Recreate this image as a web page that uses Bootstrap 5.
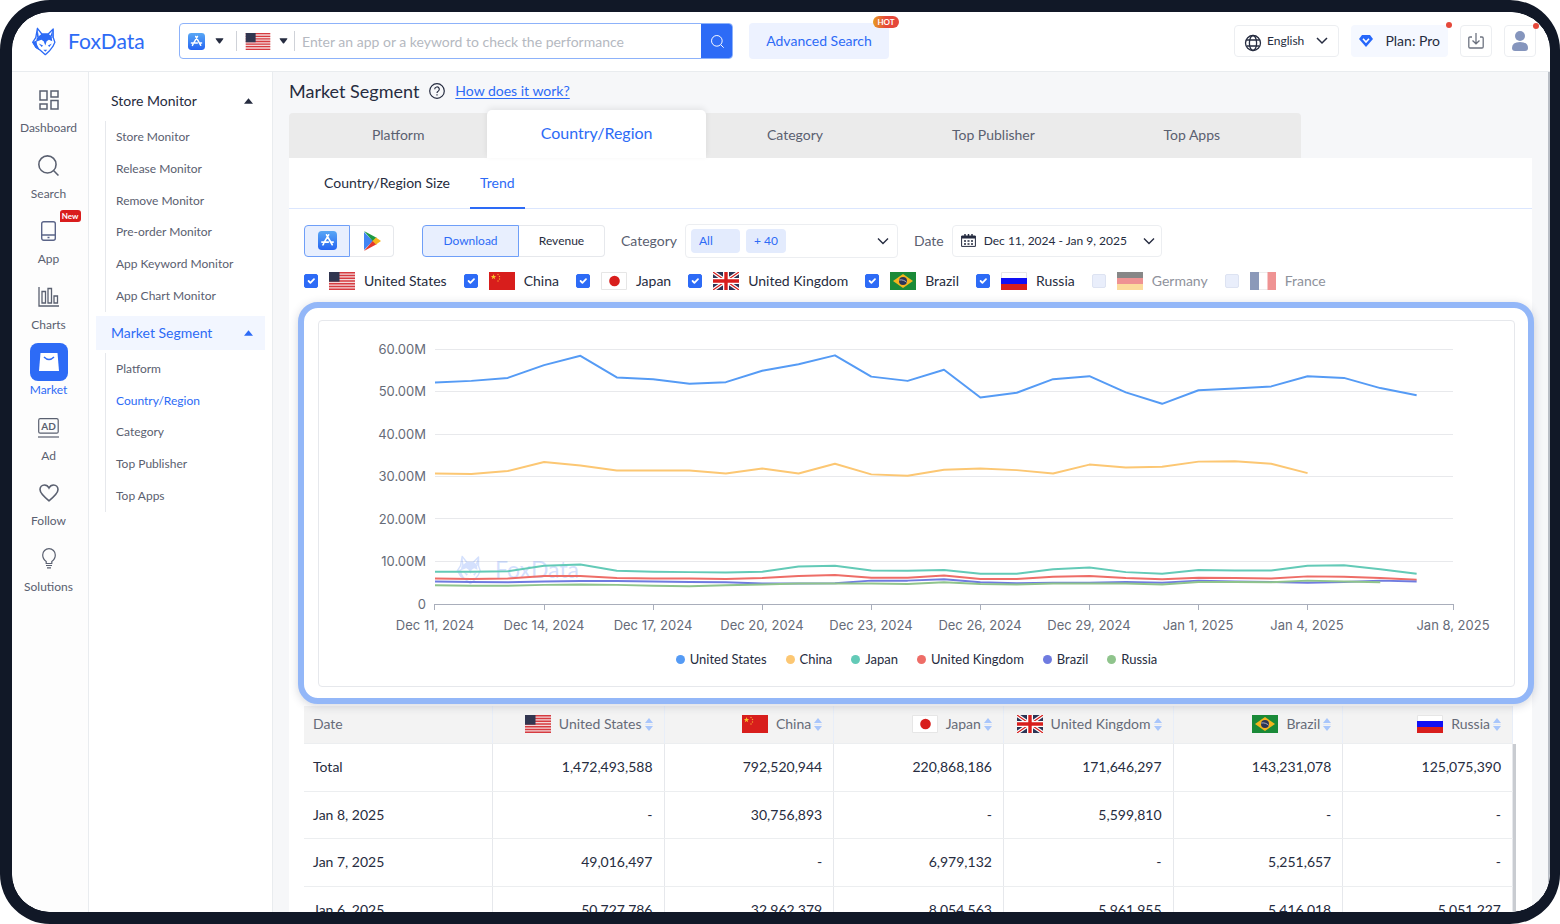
<!DOCTYPE html>
<html lang="en">
<head>
<meta charset="utf-8">
<meta name="viewport" content="width=device-width, initial-scale=1">
<title>FoxData - Market Segment</title>
<link href="https://cdn.jsdelivr.net/npm/bootstrap@5.3.0/dist/css/bootstrap.min.css" rel="stylesheet">
<style>
:root{--fx-blue:#2d6bf6;--fx-ink:#262c40;--fx-mute:#5a6070;--fx-line:#e6e8ec}
body{font-family:Lato,"Noto Sans",sans-serif;font-size:14px;line-height:20px;color:var(--fx-ink);background:#fff}
a{color:inherit;text-decoration:none}
button{font:inherit;color:inherit}
svg{display:block;flex:none}
.shell{height:100vh;border:solid #111827;border-width:12px 10px 12px 12px;border-radius:50px;overflow:hidden;background:#111827}
.shell-in{border-radius:38px;background:#fff;overflow:hidden}
.topbar{height:60px;border-bottom:1px solid #e9ecef;padding:0 14px 1px 20px;background:#fff}
.brand{color:var(--fx-blue);font-size:21px;line-height:28px;width:147px;gap:12px}
.searchbox{width:554px;height:36px;border:1px solid #8db2fa;border-radius:4px;overflow:hidden}
.searchbox input{font-size:14px;box-shadow:none!important;padding:0 7px}
.searchbox input::placeholder{color:#b5b9c1;opacity:1}
.pick{border:0;background:none;padding:0 6px 0 8px;height:20px;gap:8px;border-right:1px solid #cfd2d8}
.pick.roomy{padding-right:12px;gap:10px}
.btn-go{background:var(--fx-blue);width:32px;border:0;margin:-1px}
.btn-adv{background:#edf2ff;color:var(--fx-blue);height:36px;width:140px;border-radius:4px;margin-left:16px}
.hot{top:-7px;right:-10px;width:26px;height:12px;border-radius:6px;background:linear-gradient(90deg,#e89b22,#e5483a 50%);color:#fff;font-size:8px;line-height:12px;font-weight:700}
.tools{gap:12px}
.boxed{height:32px;border:1px solid #eceef1;border-radius:4px;background:#fff}
.boxed.square{width:32px}
.lang{width:105px}
.lang select{border:0;background-color:transparent;font-size:12px;padding:0 26px 0 32px;color:var(--fx-ink);height:30px;background-image:url("data:image/svg+xml,%3Csvg xmlns='http://www.w3.org/2000/svg' viewBox='0 0 12 12'%3E%3Cpath d='M1 3l5 5 5-5' fill='none' stroke='%23262c40' stroke-width='1.500'/%3E%3C/svg%3E");background-size:12px;background-position:right 10px center}
.lang svg{left:9px;top:8px}
.plan{width:97px;background:#f5f8ff;height:32px;border:0;border-radius:4px}
.dot-red{width:6px;height:6px;border-radius:50%;background:#e5483a;top:-3px;right:-4px}
.rail{width:77px;background:#fdfdfd;border-right:1px solid #e9ecef;padding:11px 3px 0 0}
.rail-list{height:524px}
.rail a{color:var(--fx-mute);font-size:12px;line-height:16px;gap:3px}
.rail .ico{width:38px;height:34px}
.rail a.on{color:var(--fx-blue)}
.rail a.on .ico{background:var(--fx-blue);border-radius:8px;height:38px;margin:-2px 0}
.new-tag{background:#d91d1d;color:#fff;font-size:8px;line-height:12px;height:12px;width:21px;border-radius:3px 3px 3px 0;left:30px;top:-4px;font-weight:700}
.side{width:184px;border-right:1px solid #e9ecef;padding:12px 7px 0;background:#fff}
.side-head{height:34px;padding:0 12px 0 15px}
.side-head.on{background:#f2f6ff;color:var(--fx-blue)}
.side-list{margin-left:9px;border-left:1px solid var(--fx-line);padding-left:10px;font-size:12px;color:var(--fx-mute)}
.side-list .on{color:var(--fx-blue)}
.len-6{height:191px;margin-top:3px;margin-bottom:4px}
.len-5{height:159px;margin-top:3px}
.work{background:#f6f7f9;padding:0 16px;border-right:2px solid #b9bec6;overflow:hidden}
.page-title{height:38px;gap:10px}
.page-title h1{font-size:18px;line-height:24px;font-weight:400;margin:0}
.page-title a{color:var(--fx-blue);text-decoration:underline;text-underline-offset:2px}
.seg{max-width:1012px;height:45px;margin-top:3px;padding:0 10px;grid-template-columns:repeat(5,1fr);background:#ebebeb;border-radius:4px 4px 0 0}
.seg a{color:var(--fx-mute);height:45px;padding-bottom:2px}
.seg a.on{background:#fff;color:var(--fx-blue);margin:-3px -10px 0;height:48px;font-size:16px;border-radius:5px 5px 0 0;box-shadow:0 -2px 6px rgba(0,0,0,.08)}
.panel-w{background:#fff}
.sub{height:51px;border-bottom:1px solid #dbe6fe;padding-left:25px;gap:10px}
.sub a{padding:0 10px 2px;height:51px}
.sub a.on{color:var(--fx-blue);border-bottom:2px solid var(--fx-blue);padding-bottom:0}
.filters{padding:14px 15px 0;height:49px}
.filters .lbl{color:var(--fx-mute)}
.duo button{height:32px;border:1px solid var(--fx-line);background:#fff;font-size:12px;padding:0}
.duo button:first-child{border-radius:4px 0 0 4px}
.duo button:last-child{border-radius:0 4px 4px 0;border-left:0}
.duo button.on{background:#e8effe;border:1px solid #6f9ff8;color:var(--fx-blue)}
.cat-pick{width:213px;height:34px;border:1px solid #eceef1;border-radius:4px;background:#fff;padding:0 8px 0 5px;gap:6px}
.chip{background:#e3ebfd;color:var(--fx-blue);font-size:12px;height:24px;border-radius:4px;padding:0 8px}
.chip.wide{width:49px}
.date-pick{width:210px;font-size:12px;padding:0 6px 0 8px}
.checks{padding:0 15px;height:45px;gap:17px}
.checks label{gap:9px}
.checks input.form-check-input{width:14px;height:14px;margin:0 2px 0 0;border-radius:2px;background-color:#e9eefb;border:1px solid #dde3f2;flex:none}
.checks input.form-check-input:checked{background-color:var(--fx-blue);border-color:var(--fx-blue)}
.checks .off{color:#8e929c}
.checks .off svg{opacity:.5}
.spot{margin:-1px -2px 0 9px;border:6px solid #93b7f8;border-radius:20px;padding:12px 13px 11px 14px;background:#fff;box-shadow:0 2px 10px rgba(40,50,80,.2);z-index:1}
.chart-box{border:1px solid var(--fx-line);border-radius:4px;padding-bottom:17px}
.axis text{font:13px Inter,sans-serif;fill:#666b78}
.legend{gap:19px;font-size:13px}
.legend span{gap:5px}
.legend i{width:9px;height:9px;border-radius:50%}
.grid-box{margin:2px 19px 0 15px;position:relative}
.grid-box::after{content:"";position:absolute;right:-3px;top:38px;bottom:0;width:3px;background:#c9ccd1}
.grid-box table{table-layout:fixed;width:100%;margin:0;color:var(--fx-ink)}
.grid-box th,.grid-box td{border:0;border-right:1px solid var(--fx-line);border-bottom:1px solid #eceef0;padding:0 11px 0 9px;height:48px;vertical-align:middle;text-align:right;font-weight:400}
.grid-box tr:nth-child(even)>*{height:47px}
.grid-box thead th{height:37px;background:#f3f3f3;color:#666b78;border-right-color:#e8eef8}
.grid-box th:first-child{text-align:left}
.sorts{gap:8px}
.sorts button{border:0;background:none;padding:0;gap:3px}
</style>
</head>
<body>
<svg width="0" height="0" class="position-absolute" aria-hidden="true">
<defs>
<symbol id="us" viewBox="0 0 26 18"><path fill="#f3d9da" d="M0 0h26v18H0z"/><path stroke="#d63b40" stroke-width="1.400" d="M0 .7h26M0 3.500h26M0 6.200h26M0 9h26M0 11.800h26M0 14.500h26M0 17.300h26"/><path fill="#313650" d="M0 0h10.500v9.700H0z"/></symbol>
<symbol id="cn" viewBox="0 0 26 18"><path fill="#d81e1c" d="M0 0h26v18H0z"/><path fill="#f8c52c" d="M4.500 2l.7 2h2L5.600 5.300l.6 2-1.700-1.200-1.700 1.200.6-2L1.800 4h2z"/><g fill="#f8a52c"><circle cx="9" cy="2.500" r=".7"/><circle cx="10.500" cy="4.500" r=".7"/><circle cx="10.500" cy="7" r=".7"/><circle cx="9" cy="9" r=".7"/></g></symbol>
<symbol id="jp" viewBox="0 0 26 18"><path fill="#fff" stroke="#e6e6e6" d="M.5.500h25v17H.5z"/><circle cx="13.500" cy="9" r="5.300" fill="#d81e1c"/></symbol>
<symbol id="uk" viewBox="0 0 26 18"><path fill="#2c3455" d="M0 0h26v18H0z"/><path stroke="#fff" stroke-width="3.600" d="M0 0l26 18M26 0L0 18"/><path stroke="#d81e1c" stroke-width="1.200" d="M0 0l26 18M26 0L0 18"/><path stroke="#fff" stroke-width="6" d="M13 0v18M0 9h26"/><path stroke="#d81e1c" stroke-width="3.400" d="M13 0v18M0 9h26"/></symbol>
<symbol id="br" viewBox="0 0 26 18"><path fill="#1a8a38" d="M0 0h26v18H0z"/><path fill="#f4b51e" d="M13 2l10 7-10 7L3 9z"/><circle cx="13" cy="9" r="4" fill="#2c3455"/><path d="M9.300 8c3-.5 5.500.5 7.300 2.300" stroke="#c9cddb" fill="none" stroke-width=".8"/></symbol>
<symbol id="ru" viewBox="0 0 26 18"><path fill="#fff" stroke="#e6e6e6" d="M.5.500h25v17H.5z"/><path fill="#1010f5" d="M0 6h26v6H0z"/><path fill="#d81e1c" d="M0 12h26v6H0z"/></symbol>
<symbol id="de" viewBox="0 0 26 18"><path fill="#111" d="M0 0h26v6H0z"/><path fill="#e02a2a" d="M0 6h26v6H0z"/><path fill="#fbbb3d" d="M0 12h26v6H0z"/></symbol>
<symbol id="fr" viewBox="0 0 26 18"><path fill="#fff" stroke="#ddd" d="M.5.500h25v17H.5z"/><path fill="#1a3676" d="M0 0h9v18H0z"/><path fill="#e02a2a" d="M17.500 0H26v18h-8.500z"/></symbol>
<symbol id="fox" viewBox="0 0 72 88"><path fill="none" stroke="currentColor" stroke-width="4" stroke-linejoin="round" d="M16 4l-5 28-9 14 10 16 12 8 16 14 12-11 11-14 6-13-5-14V6L48 22H30z"/><path fill="currentColor" d="M20 28l10-8h18l11 8 2 15-10-4-7 4-4 13-5-13-7-4-16 6 2-12zM0 46l13-5 2 13 9 17-14-8zM20 50l13 6-4 5zM60 50l-12 6 4 5zM34 69h12l-6 6zM16 4l4 24-6 4zM63 6l-7 20 6 8z"/></symbol>
<symbol id="appstore" viewBox="0 0 20 20"><linearGradient id="ag" x2="0" y2="1"><stop stop-color="#58a7f5"/><stop offset="1" stop-color="#2564f2"/></linearGradient><rect width="20" height="20" rx="4" fill="url(#ag)"/><path d="M11.200 4L6.800 11.500M9 4l6 10.500M4 11.700h7M13.300 11.700H16M6 13.200L5.200 14.600" stroke="#fff" stroke-width="1.700" stroke-linecap="round"/></symbol>
<symbol id="caret" viewBox="0 0 10 6"><path d="M1.200 0h7.600q1 0 .4.900L5.700 5.400q-.7.700-1.400 0L.8.900Q.2 0 1.200 0z" fill="currentColor"/></symbol>
<symbol id="caretup" viewBox="0 0 8 5"><path d="M4 0l4 5H0z" fill="currentColor"/></symbol>
<symbol id="chev" viewBox="0 0 12 8"><path d="M1 1.500l5 5 5-5" fill="none" stroke="#262c40" stroke-width="1.400"/></symbol>
<symbol id="lens" viewBox="0 0 20 20"><g fill="none" stroke="currentColor" stroke-width="1.500"><circle cx="9" cy="9" r="8.200"/><path d="M15 15l4.500 4.500"/></g></symbol>
<symbol id="sort" viewBox="0 0 8 13"><path d="M4 0l4 5H0zM4 13l4-5H0z" fill="#a9c6fb"/><path d="M0 6.500h8" stroke="#dfe8fb"/></symbol>
</defs>
</svg>

<div class="shell">
<div class="shell-in h-100 d-flex flex-column">
<header class="topbar d-flex align-items-center flex-shrink-0">
  <a class="brand d-flex align-items-center" href="#"><svg width="24" height="29"><use href="#fox"/></svg>FoxData</a>
  <form class="searchbox d-flex align-items-center">
    <button type="button" class="pick roomy d-flex align-items-center" aria-label="Store"><svg width="17" height="17"><use href="#appstore"/></svg><svg width="9" height="6"><use href="#caret"/></svg></button>
    <button type="button" class="pick d-flex align-items-center" aria-label="Country"><svg width="26" height="17"><use href="#us"/></svg><svg width="9" height="6"><use href="#caret"/></svg></button>
    <input class="form-control border-0 h-100" type="text" aria-label="Search" placeholder="Enter an app or a keyword to check the performance">
    <button type="button" class="btn-go d-flex align-items-center justify-content-center flex-shrink-0 text-white align-self-stretch" aria-label="Go"><svg width="13" height="13"><use href="#lens"/></svg></button>
  </form>
  <a class="btn-adv d-flex align-items-center justify-content-center position-relative" href="#">Advanced Search<span class="hot position-absolute text-center">HOT</span></a>
  <div class="tools d-flex align-items-center ms-auto">
    <div class="boxed lang position-relative"><svg class="position-absolute" width="18" height="18" viewBox="0 0 18 18" fill="none" stroke="#262c40" stroke-width="1.300"><circle cx="9" cy="9" r="7.500"/><ellipse cx="9" cy="9" rx="3.600" ry="7.500"/><path d="M2.500 6h13M2.500 12h13"/></svg><select class="form-select" aria-label="Language"><option>English</option></select></div>
    <button type="button" class="plan position-relative d-flex align-items-center justify-content-between px-2"><svg width="14" height="12" viewBox="0 0 14 12"><path d="M3 0h8l3 4-7 8-7-8z" fill="#2667fb"/><path d="M4 3.800l3 3.200 3-3.200" stroke="#fff" stroke-width="1.600" fill="none"/></svg>Plan: Pro<span class="dot-red position-absolute"></span></button>
    <button type="button" class="boxed square d-flex align-items-center justify-content-center p-0" aria-label="Download"><svg width="16" height="16" viewBox="0 0 16 16" fill="none" stroke="#6d7380" stroke-width="1.300"><path d="M4 4H2Q.8 4 .8 5.200v8.600Q.8 15 2 15h12q1.200 0 1.200-1.200V5.200Q15.200 4 14 4h-2M8 0v10.500M4.500 7.500L8 10.800l3.500-3.300"/></svg></button>
    <button type="button" class="boxed square d-flex align-items-center justify-content-center position-relative p-0" aria-label="Account"><svg width="16" height="20" viewBox="0 0 16 20" fill="#8595bd"><circle cx="8" cy="5" r="5"/><path d="M0 17q0-6 8-6t8 6q0 3-3 3H3q-3 0-3-3z"/></svg><span class="dot-red position-absolute"></span></button>
  </div>
</header>

<div class="d-flex flex-grow-1 overflow-hidden">
<nav class="rail flex-shrink-0">
  <div class="rail-list d-flex flex-column">
    <a href="#" class="flex-fill d-flex flex-column align-items-center"><span class="ico d-flex align-items-center justify-content-center"><svg width="20" height="20" viewBox="0 0 20 20" fill="none" stroke="#5a6070" stroke-width="1.500"><path d="M1 1h7v9H1zM12 1h7v6h-7zM1 14h7v5H1zM12 10.500h7V19h-7z"/></svg></span>Dashboard</a>
    <a href="#" class="flex-fill d-flex flex-column align-items-center"><span class="ico d-flex align-items-center justify-content-center"><svg width="21" height="21"><use href="#lens"/></svg></span>Search</a>
    <a href="#" class="flex-fill d-flex flex-column align-items-center"><span class="ico d-flex align-items-center justify-content-center position-relative"><svg width="15" height="20" viewBox="0 0 15 20" fill="none" stroke="#5a6488" stroke-width="1.400"><rect x=".7" y=".7" width="13.600" height="18.600" rx="2"/><path d="M1 14h13M6.500 16.500h2"/></svg><span class="new-tag position-absolute text-center">New</span></span>App</a>
    <a href="#" class="flex-fill d-flex flex-column align-items-center"><span class="ico d-flex align-items-center justify-content-center"><svg width="21" height="20" viewBox="0 0 21 20" fill="none" stroke="#5a6070" stroke-width="1.300"><path d="M1 0v19h20M4 4.500h3.500V16H4zM10 1.500h3.500V16H10zM16 9h3.500v7H16z"/></svg></span>Charts</a>
    <a href="#" class="on flex-fill d-flex flex-column align-items-center"><span class="ico d-flex align-items-center justify-content-center"><svg width="20" height="18" viewBox="0 0 20 18"><path d="M1.500 0h17L20 18H0z" fill="#fff"/><path d="M5 4q5 5 10 0" stroke="#2d6bf6" stroke-width="1.500" fill="none"/></svg></span>Market</a>
    <a href="#" class="flex-fill d-flex flex-column align-items-center"><span class="ico d-flex align-items-center justify-content-center"><svg width="21" height="20" viewBox="0 0 21 20" fill="none" stroke="#5a6070" stroke-width="1.200"><rect x=".7" y=".7" width="19.500" height="14.500" rx="1.500"/><path d="M0 19h21"/><text x="10.500" y="11.800" text-anchor="middle" font-size="10" font-weight="700" fill="#5a6070" stroke="none">AD</text></svg></span>Ad</a>
    <a href="#" class="flex-fill d-flex flex-column align-items-center"><span class="ico d-flex align-items-center justify-content-center"><svg width="20" height="18" viewBox="0 0 20 18" fill="none" stroke="#5a6070" stroke-width="1.600"><path d="M10 16.800C4 12 1 9 1 5.600 1 3 3 1 5.400 1 7.500 1 9 2 10 4c1-2 2.500-3 4.600-3C17 1 19 3 19 5.600c0 3.400-3 6.400-9 11.200z"/></svg></span>Follow</a>
    <a href="#" class="flex-fill d-flex flex-column align-items-center"><span class="ico d-flex align-items-center justify-content-center"><svg width="14" height="21" viewBox="0 0 14 21" fill="none" stroke="#5a6070" stroke-width="1.200"><path d="M4.200 15.500v-2Q.7 11 .7 7a6.300 6.300 0 0 1 12.600 0q0 4-3.500 6.500v2zM4 17.500h6M5 19.800h4"/></svg></span>Solutions</a>
  </div>
</nav>

<aside class="side flex-shrink-0">
  <div class="side-head d-flex align-items-center justify-content-between">Store Monitor<svg width="9" height="6"><use href="#caretup"/></svg></div>
  <div class="side-list len-6 d-flex flex-column">
    <a href="#" class="flex-fill d-flex align-items-center">Store Monitor</a><a href="#" class="flex-fill d-flex align-items-center">Release Monitor</a><a href="#" class="flex-fill d-flex align-items-center">Remove Monitor</a><a href="#" class="flex-fill d-flex align-items-center">Pre-order Monitor</a><a href="#" class="flex-fill d-flex align-items-center">App Keyword Monitor</a><a href="#" class="flex-fill d-flex align-items-center">App Chart Monitor</a>
  </div>
  <div class="side-head on d-flex align-items-center justify-content-between">Market Segment<svg width="9" height="6"><use href="#caretup"/></svg></div>
  <div class="side-list len-5 d-flex flex-column">
    <a href="#" class="flex-fill d-flex align-items-center">Platform</a><a href="#" class="on flex-fill d-flex align-items-center">Country/Region</a><a href="#" class="flex-fill d-flex align-items-center">Category</a><a href="#" class="flex-fill d-flex align-items-center">Top Publisher</a><a href="#" class="flex-fill d-flex align-items-center">Top Apps</a>
  </div>
</aside>

<main class="work flex-grow-1">
  <div class="page-title d-flex align-items-center"><h1>Market Segment</h1><svg width="16" height="16" viewBox="0 0 16 16" fill="none" stroke="#262c40" stroke-width="1.200"><circle cx="8" cy="8" r="7.300"/><path d="M5.700 6.300a2.300 2.300 0 1 1 3.400 2Q8 8.800 8 10M8 11.200v1.300"/></svg><a href="#">How does it work?</a></div>
  <nav class="seg d-grid">
    <a href="#" class="d-flex align-items-center justify-content-center">Platform</a><a href="#" class="on d-flex align-items-center justify-content-center">Country/Region</a><a href="#" class="d-flex align-items-center justify-content-center">Category</a><a href="#" class="d-flex align-items-center justify-content-center">Top Publisher</a><a href="#" class="d-flex align-items-center justify-content-center">Top Apps</a>
  </nav>
  <div class="panel-w">
    <nav class="sub d-flex"><a href="#" class="d-flex align-items-center">Country/Region Size</a><a href="#" class="on d-flex align-items-center">Trend</a></nav>
    <div class="filters d-flex align-items-center">
      <div class="duo d-flex"><button type="button" class="on d-flex align-items-center justify-content-center" aria-label="App Store" style="width:46px"><svg width="19" height="19"><use href="#appstore"/></svg></button><button type="button" class="d-flex align-items-center justify-content-center" aria-label="Google Play" style="width:44px"><svg width="18" height="20" viewBox="0 0 18 20"><path d="M1 1v18l9-9z" fill="#4285f4"/><path d="M1 0l13 7-4 3.500z" fill="#1e9a43"/><path d="M1 20l13-7-4-3.500z" fill="#e5382c"/><path d="M13 6.500l5 3.500-5 3.500L9.500 10z" fill="#f6b51d"/></svg></button></div>
      <div class="duo d-flex ms-4 ps-1"><button type="button" class="on" style="width:97px">Download</button><button type="button" style="width:86px">Revenue</button></div>
      <span class="lbl ms-3 me-2" id="catl">Category</span>
      <button type="button" class="cat-pick d-flex align-items-center" aria-labelledby="catl"><span class="chip wide d-flex align-items-center">All</span><span class="chip d-flex align-items-center">+ 40</span><svg width="12" height="8" class="ms-auto"><use href="#chev"/></svg></button>
      <span class="lbl ms-3 me-2" id="datel">Date</span>
      <button type="button" class="boxed date-pick d-flex align-items-center" aria-labelledby="datel"><svg width="15" height="13" viewBox="0 0 15 13"><path d="M.6 2h13.800v10.400H.6z" fill="none" stroke="#262c40"/><path d="M.6 2h13.800v2.600H.6z" fill="#262c40"/><path d="M4 0v3M7.500 0v3M11 0v3" stroke="#262c40" stroke-width="1.500"/><path d="M3 7h9.500M3 10h9.500" stroke="#262c40" stroke-width="1.600" stroke-dasharray="2 1.500"/></svg><span class="ms-2">Dec 11, 2024 - Jan 9, 2025</span><svg width="12" height="8" class="ms-auto"><use href="#chev"/></svg></button>
    </div>
    <div class="checks d-flex align-items-center">
      <label class="d-flex align-items-center"><input class="form-check-input" type="checkbox" checked><svg width="26" height="18"><use href="#us"/></svg>United States</label>
      <label class="d-flex align-items-center"><input class="form-check-input" type="checkbox" checked><svg width="26" height="18"><use href="#cn"/></svg>China</label>
      <label class="d-flex align-items-center"><input class="form-check-input" type="checkbox" checked><svg width="26" height="18"><use href="#jp"/></svg>Japan</label>
      <label class="d-flex align-items-center"><input class="form-check-input" type="checkbox" checked><svg width="26" height="18"><use href="#uk"/></svg>United Kingdom</label>
      <label class="d-flex align-items-center"><input class="form-check-input" type="checkbox" checked><svg width="26" height="18"><use href="#br"/></svg>Brazil</label>
      <label class="d-flex align-items-center"><input class="form-check-input" type="checkbox" checked><svg width="26" height="18"><use href="#ru"/></svg>Russia</label>
      <label class="off d-flex align-items-center"><input class="form-check-input" type="checkbox"><svg width="26" height="18"><use href="#de"/></svg>Germany</label>
      <label class="off d-flex align-items-center"><input class="form-check-input" type="checkbox"><svg width="26" height="18"><use href="#fr"/></svg>France</label>
    </div>

    <section class="spot position-relative">
      <div class="chart-box">
        <svg class="axis w-100" viewBox="319 321 1195 328" role="img" aria-label="Downloads by country">
          <path d="M435 349.500h1018M435 391.500h1018M435 434.500h1018M435 476.500h1018M435 518.500h1018M435 561.500h1018" stroke="#e8e9ec"/>
          <path d="M434 604.500h1020M434.500 604v6M544.500 604v6M653.500 604v6M762.500 604v6M871.500 604v6M980.500 604v6M1089.500 604v6M1198.500 604v6M1307.500 604v6M1453.500 604v6" stroke="#a9aebb" fill="none"/>
          <g text-anchor="end"><text x="426" y="354">60.00M</text><text x="426" y="396">50.00M</text><text x="426" y="439">40.00M</text><text x="426" y="481">30.00M</text><text x="426" y="524">20.00M</text><text x="426" y="566">10.00M</text><text x="426" y="609">0</text></g>
          <g text-anchor="middle"><text x="435" y="630">Dec 11, 2024</text><text x="544" y="630">Dec 14, 2024</text><text x="653" y="630">Dec 17, 2024</text><text x="762" y="630">Dec 20, 2024</text><text x="871" y="630">Dec 23, 2024</text><text x="980" y="630">Dec 26, 2024</text><text x="1089" y="630">Dec 29, 2024</text><text x="1198" y="630">Jan 1, 2025</text><text x="1307" y="630">Jan 4, 2025</text><text x="1453" y="630">Jan 8, 2025</text></g>
          <g opacity=".2" color="#2d6bf6"><use href="#fox" x="456" y="555" width="26" height="30"/><text x="495" y="578" style="font:23px Lato;fill:#2d6bf6">FoxData</text></g>
          <g id="lines" fill="none" stroke-width="2" stroke-linejoin="round"></g>
        </svg>
        <div class="legend d-flex justify-content-center" id="legend"></div>
      </div>
    </section>

    <div class="grid-box">
      <table class="table">
        <colgroup><col style="width:188px"><col style="width:172px"><col><col><col><col><col></colgroup>
        <thead><tr><th scope="col">Date</th>
          <th scope="col"><div class="sorts d-flex align-items-center justify-content-end"><svg width="26" height="18"><use href="#us"/></svg><button type="button" class="d-flex align-items-center">United States<svg width="8" height="13"><use href="#sort"/></svg></button></div></th>
          <th scope="col"><div class="sorts d-flex align-items-center justify-content-end"><svg width="26" height="18"><use href="#cn"/></svg><button type="button" class="d-flex align-items-center">China<svg width="8" height="13"><use href="#sort"/></svg></button></div></th>
          <th scope="col"><div class="sorts d-flex align-items-center justify-content-end"><svg width="26" height="18"><use href="#jp"/></svg><button type="button" class="d-flex align-items-center">Japan<svg width="8" height="13"><use href="#sort"/></svg></button></div></th>
          <th scope="col"><div class="sorts d-flex align-items-center justify-content-end"><svg width="26" height="18"><use href="#uk"/></svg><button type="button" class="d-flex align-items-center">United Kingdom<svg width="8" height="13"><use href="#sort"/></svg></button></div></th>
          <th scope="col"><div class="sorts d-flex align-items-center justify-content-end"><svg width="26" height="18"><use href="#br"/></svg><button type="button" class="d-flex align-items-center">Brazil<svg width="8" height="13"><use href="#sort"/></svg></button></div></th>
          <th scope="col"><div class="sorts d-flex align-items-center justify-content-end"><svg width="26" height="18"><use href="#ru"/></svg><button type="button" class="d-flex align-items-center">Russia<svg width="8" height="13"><use href="#sort"/></svg></button></div></th></tr></thead>
        <tbody>
          <tr><th scope="row">Total</th><td>1,472,493,588</td><td>792,520,944</td><td>220,868,186</td><td>171,646,297</td><td>143,231,078</td><td>125,075,390</td></tr>
          <tr><th scope="row">Jan 8, 2025</th><td>-</td><td>30,756,893</td><td>-</td><td>5,599,810</td><td>-</td><td>-</td></tr>
          <tr><th scope="row">Jan 7, 2025</th><td>49,016,497</td><td>-</td><td>6,979,132</td><td>-</td><td>5,251,657</td><td>-</td></tr>
          <tr><th scope="row">Jan 6, 2025</th><td>50,727,786</td><td>32,962,379</td><td>8,054,563</td><td>5,961,955</td><td>5,416,018</td><td>5,051,227</td></tr>
        </tbody>
      </table>
    </div>
  </div>
</main>
</div>
</div>
</div>
<script src="https://cdn.jsdelivr.net/npm/bootstrap@5.3.0/dist/js/bootstrap.bundle.min.js"></script>
<script>
// Daily downloads in millions, one value per day from Dec 11
const series = [
  ['United States', '#559bf5', [52.1,52.5,53.2,56.2,58.4,53.3,52.9,51.8,52.2,54.9,56.4,58.5,53.5,52.5,55.1,48.6,49.7,52.9,53.6,49.8,47.1,50.3,50.7,51.2,53.6,53.2,50.8,49.1]],
  ['China', '#fcc773', [30.7,30.6,31.3,33.4,32.6,31.4,31.4,31.4,30.7,31.9,30.7,33.0,30.5,30.2,31.6,31.9,31.5,30.7,32.8,32.1,32.3,33.5,33.6,33.0,30.8]],
  ['Japan', '#63cab7', [7.6,7.6,7.7,9.0,9.3,7.8,7.6,7.5,7.4,7.6,8.8,9.0,7.9,7.8,8.0,7.1,7.1,8.2,8.6,7.5,7.1,8.0,7.9,7.9,9.0,9.1,8.2,7.1]],
  ['United Kingdom', '#ee6d67', [6.0,5.9,6.0,6.6,6.6,6.1,6.0,6.0,5.9,6.1,6.6,6.8,6.2,6.2,6.7,5.9,5.9,6.4,6.6,6.1,5.8,6.2,6.1,6.0,6.5,6.4,6.1,5.7]],
  ['Brazil', '#6f7be0', [5.3,5.2,5.1,5.3,5.4,5.4,5.3,5.2,5.1,4.8,4.8,4.9,5.5,5.5,5.8,5.1,4.9,5.0,5.0,5.2,5.0,5.5,5.3,5.2,5.0,5.2,5.5,5.3]],
  ['Russia', '#8fc48c', [4.4,4.3,4.3,4.5,4.6,4.5,4.3,4.2,4.4,4.6,4.8,4.8,4.8,4.7,5.1,4.7,4.6,4.8,4.8,4.8,4.6,5.2,5.2,5.1,5.5,5.3,5.1]]
];
const lines = document.getElementById('lines'), legend = document.getElementById('legend');
for (const [name, color, values] of series) {
  const line = document.createElementNS('http://www.w3.org/2000/svg', 'polyline');
  line.setAttribute('stroke', color);
  line.setAttribute('points', values.map((v, i) => (435 + i * 1018 / 28) + ',' + (604 - v * 4.25)).join(' '));
  lines.append(line);
  legend.insertAdjacentHTML('beforeend', `<span class="d-flex align-items-center"><i style="background:${color}"></i>${name}</span>`);
}
</script>
</body>
</html>
